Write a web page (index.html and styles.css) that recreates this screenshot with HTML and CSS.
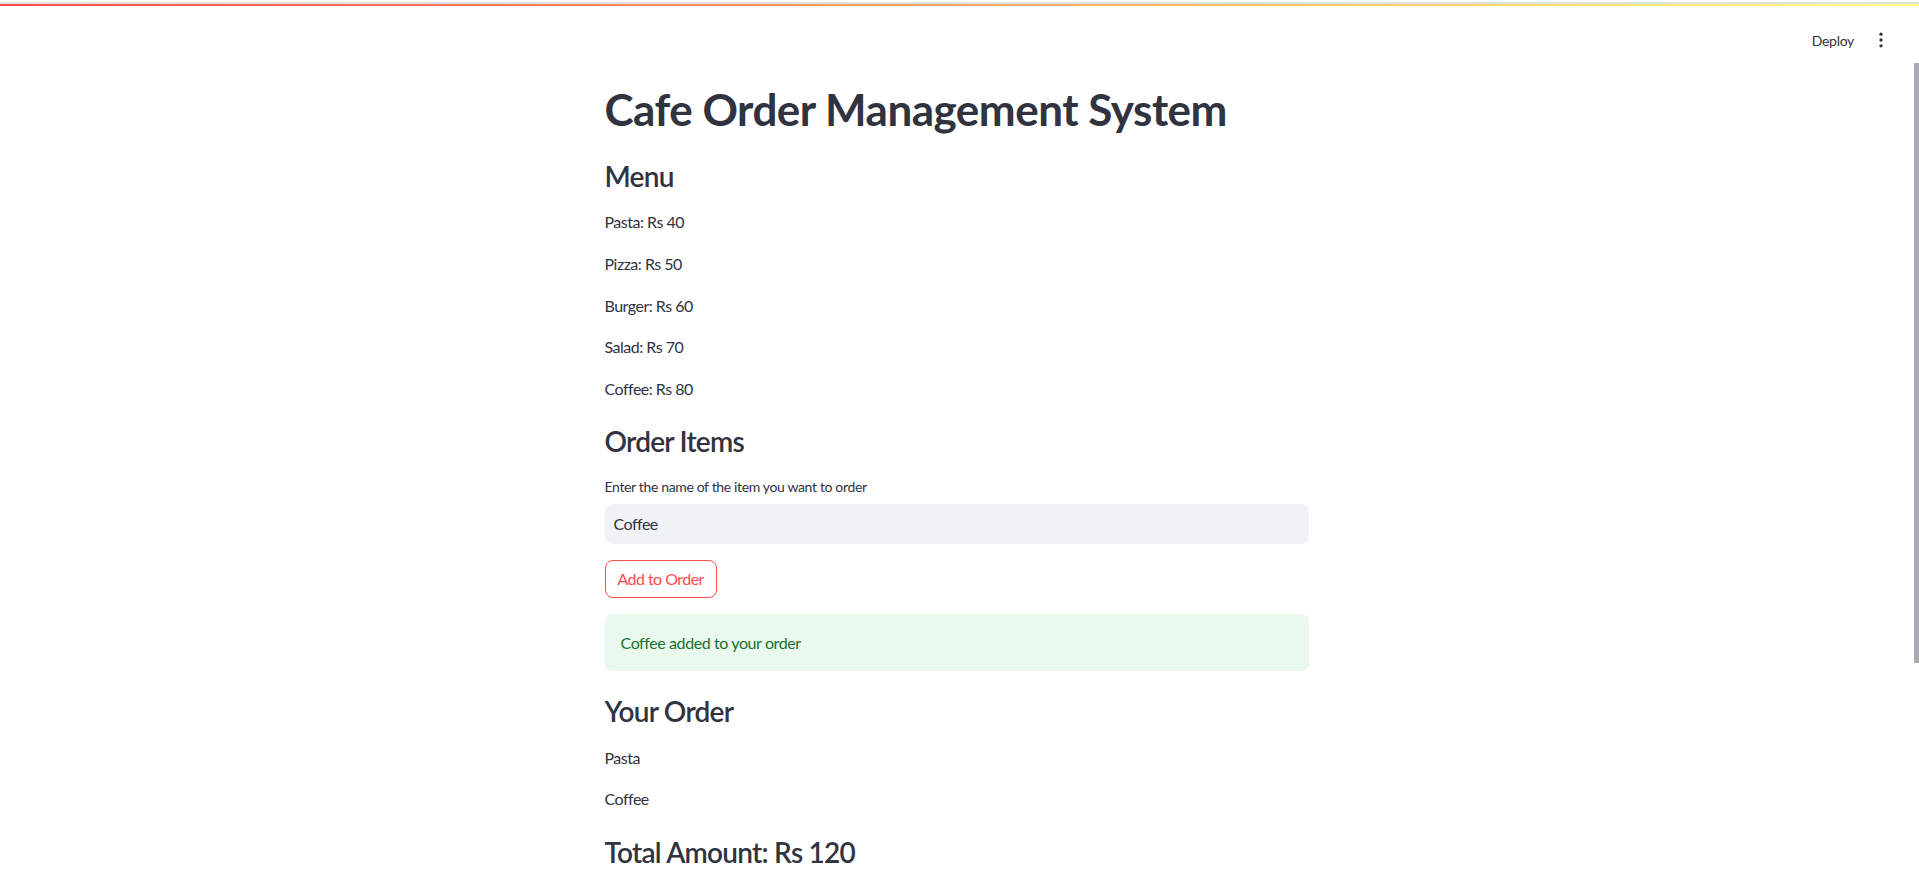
FILE: index.html
```html
<!DOCTYPE html>
<html lang="en">
<head>
<meta charset="utf-8">
<title>Cafe Order Management System</title>
<link rel="stylesheet" href="styles.css">
</head>
<body>
<div class="app">
  <div class="stripe-gap"></div>
  <div class="stripe-grey"></div>
  <div class="decoration"></div>
  <header class="toolbar">
    <button class="deploy">Deploy</button>
    <button class="menu-btn" aria-label="Main menu">
      <svg width="20" height="20" viewBox="0 0 24 24"><circle cx="12" cy="5" r="2" fill="#31333f"/><circle cx="12" cy="12" r="2" fill="#31333f"/><circle cx="12" cy="19" r="2" fill="#31333f"/></svg>
    </button>
  </header>
  <main class="main">
    <div class="block">
      <h1 class="title">Cafe Order Management System</h1>
      <h3 class="sub">Menu</h3>
      <p class="txt">Pasta: Rs 40</p>
      <p class="txt">Pizza: Rs 50</p>
      <p class="txt">Burger: Rs 60</p>
      <p class="txt">Salad: Rs 70</p>
      <p class="txt">Coffee: Rs 80</p>
      <h3 class="sub">Order Items</h3>
      <div class="field">
        <label class="field-label" for="item">Enter the name of the item you want to order</label>
        <input class="field-input" id="item" type="text" value="Coffee">
      </div>
      <div class="btn-row"><button class="add-btn">Add to Order</button></div>
      <div class="alert-success">Coffee added to your order</div>
      <h3 class="sub">Your Order</h3>
      <p class="txt">Pasta</p>
      <p class="txt">Coffee</p>
      <h3 class="sub">Total Amount: Rs 120</h3>
    </div>
  </main>
  <div class="scroll-thumb"></div>
</div>
</body>
</html>
```
FILE: styles.css
```css
* { box-sizing: border-box; }
html, body { margin: 0; padding: 0; height: 100%; overflow: hidden; background: #ffffff; }
body { font-family: "Lato", "Noto Sans", sans-serif; color: #31333f; }
.app { height: 100vh; }
.stripe-gap { height: 2px; background: #ffffff; }
.stripe-grey { height: 2px; background: #dee3e0; }
.decoration { height: 2px; background: linear-gradient(90deg, rgb(255,75,75), rgb(255,253,128)); }
.toolbar { height: 68px; display: flex; justify-content: flex-end; align-items: center; gap: 17px; padding-right: 28px; }
.deploy { font-family: inherit; font-size: 14px; letter-spacing: -0.3px; color: #31333f; background: none; border: none; padding: 0; cursor: pointer; }
.menu-btn { background: none; border: none; padding: 0; width: 20px; height: 20px; display: flex; align-items: center; justify-content: center; }
.main { margin-right: 6px; }
.block { max-width: 736px; margin: 0 auto; padding: 0 16px 160px; display: flex; flex-direction: column; gap: 16px; }
.title { margin: 0; padding-top: 9px; font-size: 44px; line-height: 1.2; font-weight: 700; letter-spacing: -0.5px; color: #31333f; }
.sub { margin: 0; padding-top: 8px; font-size: 28px; line-height: 1.2; font-weight: 600; letter-spacing: -0.75px; color: #31333f; }
.txt { margin: 0; font-size: 16px; line-height: 1.6; letter-spacing: -0.5px; }
.field { display: flex; flex-direction: column; }
.field-label { font-size: 14px; line-height: 1.6; min-height: 24px; margin-bottom: 5px; letter-spacing: -0.35px; padding-top: 1px; }
.field-input { height: 40px; width: 100%; border: 1px solid transparent; border-radius: 8px; background: #f0f2f6; padding: 0 8px; font-family: inherit; font-size: 16px; letter-spacing: -0.5px; color: #31333f; outline: none; }
.btn-row { display: flex; }
.add-btn { height: 38px; padding: 0 12px; border: 1px solid rgb(255,75,75); border-radius: 8px; background: #ffffff; color: rgb(255,75,75); font-family: inherit; font-size: 16px; letter-spacing: -0.55px; }
.alert-success { padding: 16px; border-radius: 8px; background: #e9f9ee; color: rgb(23,114,51); font-size: 16px; line-height: 25px; letter-spacing: -0.4px; }
.scroll-thumb { position: fixed; right: 0; top: 63px; width: 5px; height: 600px; background: #aaaab0; }
```
